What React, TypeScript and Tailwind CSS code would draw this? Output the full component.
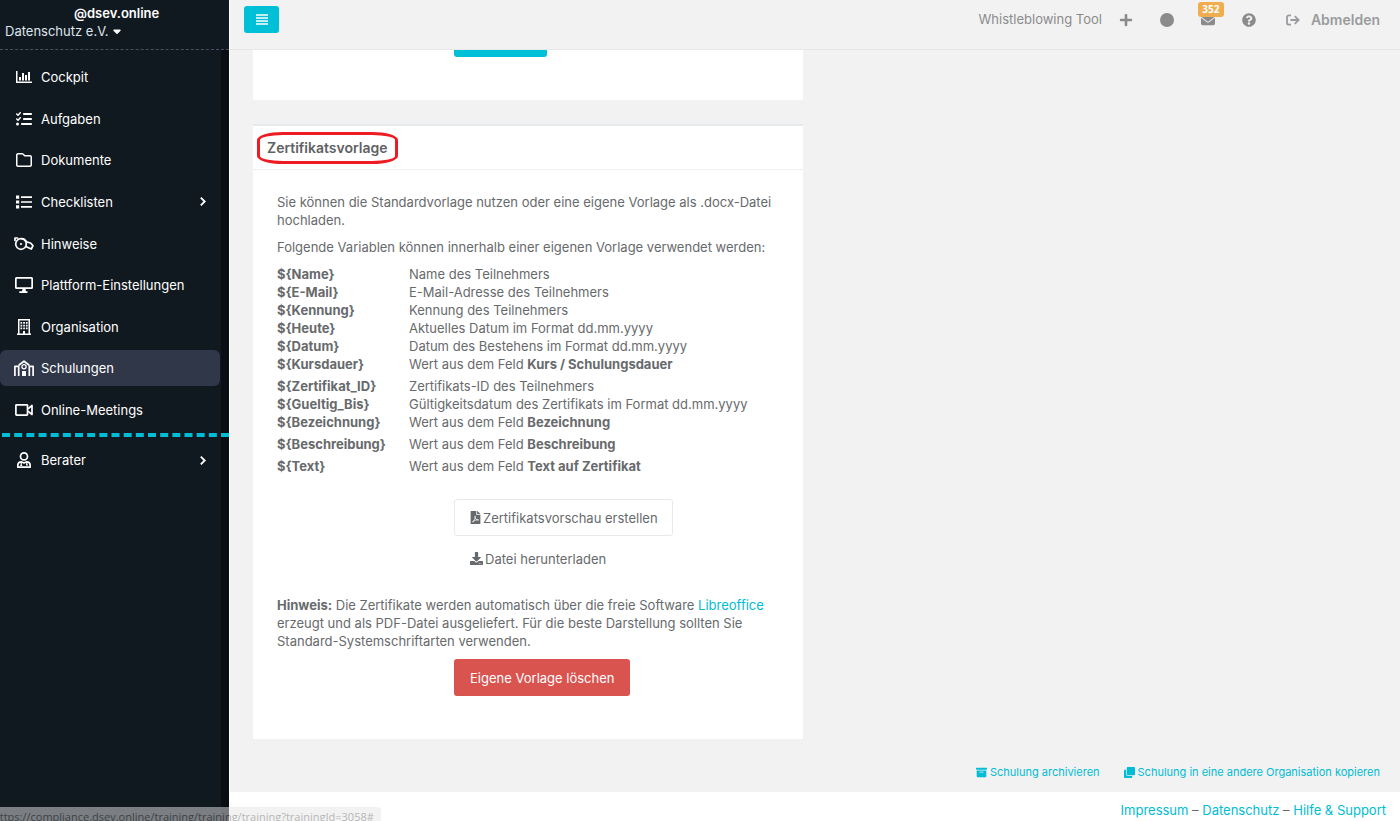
import { ReactNode } from "react";
import { FaClone, FaDownload, FaFilePdf, FaPlus, FaQuestionCircle } from "react-icons/fa";
import {
  FaBoxArchive,
  FaCaretDown,
  FaCircle,
  FaEnvelope,
  FaListCheck,
  FaRegFolder,
} from "react-icons/fa6";

const MenuIcon = () => (
  <svg width="12" height="11" viewBox="0 0 12 11" fill="none" stroke="currentColor" strokeWidth="1.400">
    <path d="M0 1h12M0 4h12M0 7h12M0 10h12" />
  </svg>
);

const ChartIcon = () => (
  <svg width="16" height="14" viewBox="0 0 16 14" fill="currentColor">
    <path d="M0 1h1.500v10.500H16V13H0zM3 7h2v3.500H3zM6 3h2v7.500H6zM9 5h2v5.500H9zM12 2h2v8.500h-2z" />
  </svg>
);

const ListIcon = () => (
  <svg width="16" height="14" viewBox="0 0 16 14" fill="currentColor">
    <path d="M0 .5h3.200v3.200H0zM0 5.400h3.200v3.200H0zM0 10.300h3.200v3.200H0zM5 1.300h11v1.600H5zM5 6.200h11v1.600H5zM5 11.100h11v1.600H5z" />
  </svg>
);

const WhistleIcon = () => (
  <svg width="20" height="14" viewBox="0 0 20 14" fill="none" stroke="currentColor" strokeWidth="1.700" strokeLinejoin="round" strokeLinecap="round">
    <path d="M1 3.500V1h2.500" />
    <circle cx="7" cy="7" r="5.300" />
    <circle cx="7" cy="7" r="1.100" fill="currentColor" stroke="none" />
    <path d="M8 1.700c2 0 3.300 1.200 4.600 3.100l4.300 1.400L19 8.700l-1.700 3.300-5-2.300" />
  </svg>
);

const MonitorIcon = () => (
  <svg width="18" height="16" viewBox="0 0 18 16" fill="currentColor">
    <path fillRule="evenodd" d="M1.500 0h15A1.500 1.500 0 0 1 18 1.500v9a1.500 1.500 0 0 1-1.500 1.500H10.500l.5 2.300H12a.8.8 0 0 1 0 1.600H4.800a.8.8 0 0 1 0-1.600H7l.5-2.300H1.500A1.500 1.500 0 0 1 0 10.500v-9A1.500 1.500 0 0 1 1.500 0zm.2 1.700v8.600h14.600V1.700z" />
  </svg>
);

const BuildingIcon = () => (
  <svg width="14" height="16" viewBox="0 0 14 16" fill="currentColor">
    <path fillRule="evenodd" d="M1 0h12v14.500h1V16H0v-1.500h1zm1.500 1.500v13H6V12h2v2.500h3.500v-13z" />
    <path d="M3.500 3h1.700v1.700H3.500zM6.200 3h1.700v1.700H6.200zM8.900 3h1.700v1.700H8.900zM3.500 5.800h1.700v1.700H3.500zM6.200 5.800h1.700v1.700H6.200zM8.900 5.800h1.700v1.700H8.900zM3.500 8.600h1.700v1.700H3.500zM6.200 8.600h1.700v1.700H6.200zM8.900 8.600h1.700v1.700H8.900z" />
  </svg>
);

const SchoolIcon = () => (
  <svg width="20" height="16" viewBox="0 0 20 16" fill="none" stroke="currentColor" strokeWidth="1.700">
    <path d="M.9 16V6.300h3.800V16M19.100 16V6.300h-3.800V16M4.700 5.200L10 1.200l5.300 4" strokeLinejoin="round" />
    <circle cx="10" cy="6.700" r="2.100" strokeWidth="1.300" />
    <path d="M8 11h4v5H8z" fill="currentColor" stroke="none" />
  </svg>
);

const VideoIcon = () => (
  <svg width="18" height="12" viewBox="0 0 18 12" fill="none" stroke="currentColor" strokeWidth="1.700" strokeLinejoin="round">
    <rect x=".9" y=".9" width="11.600" height="10.200" rx=".6" />
    <path d="M13 4.800l4-3.300v9l-4-3.300" />
  </svg>
);

const AdvisorIcon = () => (
  <svg width="14" height="16" viewBox="0 0 14 16" fill="none" stroke="currentColor" strokeWidth="1.700" strokeLinejoin="round">
    <circle cx="7" cy="4.400" r="3.500" />
    <path d="M4.200 9.800C2.200 10 .8 11.500.8 13.500v1.700h12.400v-1.700c0-2-1.400-3.500-3.400-3.700L7 11z" />
    <path d="M4.200 10v3M9.800 10v2.500M3.200 13.500h2M9 13h2" strokeWidth="1.200" />
  </svg>
);

const ChevronIcon = () => (
  <svg width="6" height="9" viewBox="0 0 6 9" fill="none" stroke="currentColor" strokeWidth="1.800">
    <path d="M.8.700L4.700 4.500.8 8.300" />
  </svg>
);

const SignOutIcon = () => (
  <svg width="14" height="12" viewBox="0 0 14 12" fill="none" stroke="currentColor" strokeWidth="1.800">
    <path d="M5 1.300H3a2 2 0 0 0-2 2v5.400a2 2 0 0 0 2 2h2" />
    <path d="M4.500 6H12M8.800 2.200L12.600 6 8.800 9.800" />
  </svg>
);

interface NavItemProps {
  icon: ReactNode;
  active?: boolean;
  expandable?: boolean;
  children: ReactNode;
}

const NavItem = ({ icon, active, expandable, children }: NavItemProps) => (
  <a
    href="#"
    className={
      active
        ? "mr-px flex h-9 items-center rounded-md bg-[#2f3749] pr-[14px] pl-3"
        : "mr-px flex h-9 items-center pr-[14px] pl-3"
    }
  >
    <span className="flex w-6 shrink-0 justify-center text-base">{icon}</span>
    <span className="ml-[5px] grow">{children}</span>
    {expandable && <ChevronIcon />}
  </a>
);

interface Variable {
  name: string;
  text: string;
  field?: string;
  spaced?: boolean;
}

const variables: Variable[] = [
  { name: "${Name}", text: "Name des Teilnehmers" },
  { name: "${E-Mail}", text: "E-Mail-Adresse des Teilnehmers" },
  { name: "${Kennung}", text: "Kennung des Teilnehmers" },
  { name: "${Heute}", text: "Aktuelles Datum im Format dd.mm.yyyy" },
  { name: "${Datum}", text: "Datum des Bestehens im Format dd.mm.yyyy" },
  { name: "${Kursdauer}", text: "Wert aus dem Feld ", field: "Kurs / Schulungsdauer" },
  { name: "${Zertifikat_ID}", text: "Zertifikats-ID des Teilnehmers", spaced: true },
  { name: "${Gueltig_Bis}", text: "Gültigkeitsdatum des Zertifikats im Format dd.mm.yyyy" },
  { name: "${Bezeichnung}", text: "Wert aus dem Feld ", field: "Bezeichnung" },
  { name: "${Beschreibung}", text: "Wert aus dem Feld ", field: "Beschreibung", spaced: true },
  { name: "${Text}", text: "Wert aus dem Feld ", field: "Text auf Zertifikat", spaced: true },
];

const Sidebar = () => (
  <aside className="flex w-[229px] shrink-0 bg-[#0a0d12] text-[13px] text-white">
    <div className="flex w-full flex-col">
      <div className="h-[50px] border-b border-dashed border-[#465160] bg-[#111920] pt-1 leading-[18px]">
        <p className="pl-[74px] font-semibold">@dsev.online</p>
        <button className="flex items-center gap-[2px] pl-[5px] text-[#dfe4ed]">
          Datenschutz e.V. <FaCaretDown className="text-xs text-white" />
        </button>
      </div>
      <div className="mr-2 grow bg-[#111920]">
        <nav className="pt-[9px]">
          <div className="flex h-[369px] flex-col justify-between">
            <NavItem icon={<ChartIcon />}>Cockpit</NavItem>
            <NavItem icon={<FaListCheck />}>Aufgaben</NavItem>
            <NavItem icon={<FaRegFolder />}>Dokumente</NavItem>
            <NavItem icon={<ListIcon />} expandable>Checklisten</NavItem>
            <NavItem icon={<WhistleIcon />}>Hinweise</NavItem>
            <NavItem icon={<MonitorIcon />}>Plattform-Einstellungen</NavItem>
            <NavItem icon={<BuildingIcon />}>Organisation</NavItem>
            <NavItem icon={<SchoolIcon />} active>Schulungen</NavItem>
            <NavItem icon={<VideoIcon />}>Online-Meetings</NavItem>
          </div>
          <div className="mt-[5px] -mr-2 mb-[5px] ml-[2px] border-t-4 border-dashed border-[#00bcd4]" />
          <NavItem icon={<AdvisorIcon />} expandable>Berater</NavItem>
        </nav>
      </div>
    </div>
  </aside>
);

const TopBar = () => (
  <header className="flex h-[50px] items-start justify-between border-b border-[#e7e7e7] pt-[6px] pr-5 pl-[14px] text-[#8b8b8b]">
    <button aria-label="Menü" className="flex h-[27px] w-[35px] items-center justify-center rounded-[3px] bg-[#00c0d8] text-white">
      <MenuIcon />
    </button>
    <div className="flex h-[27px] items-center text-sm">
      <a href="#" className="text-[13px]">Whistleblowing Tool</a>
      <button aria-label="Neu" className="ml-[17px]"><FaPlus /></button>
      <button aria-label="Status" className="ml-[27px]"><FaCircle /></button>
      <button aria-label="Nachrichten" className="relative ml-[27px]">
        <FaEnvelope />
        <span className="absolute -top-[11px] -left-[3px] h-[15px] w-[26px] rounded-[3px] bg-[#f0ad4e] text-center font-['Open_Sans',sans-serif] text-[10px] leading-[15px] font-bold text-white">
          352
        </span>
      </button>
      <button aria-label="Hilfe" className="ml-[27px]"><FaQuestionCircle /></button>
      <a href="#" className="ml-[30px] flex items-center gap-[11px] font-semibold text-[#999c9e]">
        <SignOutIcon />
        Abmelden
      </a>
    </div>
  </header>
);

const TemplateCard = () => (
  <section className="mt-6 border-t-2 border-[#e7eaec] bg-white">
    <div className="flex h-11 items-center border-b border-[#eeeff0] pl-[14px]">
      <h2 className="relative text-sm font-semibold text-[#5f6264]">
        Zertifikatsvorlage
        <span className="absolute -inset-x-[10px] -inset-y-[6px] rounded-[26px/8px] border-[3px] border-[#ed1c24]" />
      </h2>
    </div>
    <div className="px-6 pt-[23px] pb-[43px]">
      <p>Sie können die Standardvorlage nutzen oder eine eigene Vorlage als .docx-Datei hochladen.</p>
      <p className="mt-[9px]">Folgende Variablen können innerhalb einer eigenen Vorlage verwendet werden:</p>
      <table className="mt-[9px] w-full text-left">
        <tbody>
          {variables.map(({ name, text, field, spaced }) => (
            <tr key={name}>
              <th scope="row" className={spaced ? "w-[132px] p-0 pt-1 font-bold" : "w-[132px] p-0 font-bold"}>
                {name}
              </th>
              <td className={spaced ? "p-0 pt-1" : "p-0"}>
                {text}
                {field && <strong>{field}</strong>}
              </td>
            </tr>
          ))}
        </tbody>
      </table>
      <div className="mt-6 flex flex-col items-start gap-1 pl-[177px]">
        <button className="flex h-[37px] items-center gap-px rounded-[3px] border border-[#e7eaec] px-[14px]">
          <FaFilePdf /> Zertifikatsvorschau erstellen
        </button>
        <button className="flex h-[37px] items-center gap-[2px] px-4">
          <FaDownload /> Datei herunterladen
        </button>
      </div>
      <p className="mt-[19px]">
        <strong>Hinweis:</strong> Die Zertifikate werden automatisch über die freie Software{" "}
        <a href="#" className="text-[#00bcd4]">Libreoffice</a> erzeugt und als PDF-Datei
        ausgeliefert. Für die beste Darstellung sollten Sie Standard-Systemschriftarten verwenden.
      </p>
      <div className="mt-[9px] pl-[177px]">
        <button className="h-[37px] rounded-[3px] bg-[#d9534f] px-4 text-white">
          Eigene Vorlage löschen
        </button>
      </div>
    </div>
  </section>
);

export default function App() {
  return (
    <div className="flex min-h-screen overflow-hidden bg-[#f2f2f2] font-['Inter','Open_Sans',sans-serif] text-[13px] leading-[18px] text-[#676a6c]">
      <Sidebar />
      <div className="flex min-w-0 grow flex-col border-l border-white">
        <TopBar />
        <main className="grid grid-cols-2 gap-6 pr-6 pl-[23px]">
          <div>
            <section className="h-[50px] bg-white pl-[201px]">
              <div className="h-[7px] w-[93px] rounded-b-[3px] bg-[#00c0d8]" />
            </section>
            <TemplateCard />
          </div>
        </main>
        <div className="mt-6 mr-5 flex justify-end gap-6 text-[11px] leading-[18px] text-[#00bcd4]">
          <a href="#" className="flex items-center gap-[3px]">
            <FaBoxArchive /> Schulung archivieren
          </a>
          <a href="#" className="flex items-center gap-[3px]">
            <FaClone /> Schulung in eine andere Organisation kopieren
          </a>
        </div>
        <footer className="mt-[11px] grow bg-white pt-[9px] pr-[14px] text-right">
          <a href="#" className="text-[#00bcd4]">Impressum</a> –{" "}
          <a href="#" className="text-[#00bcd4]">Datenschutz</a> –{" "}
          <a href="#" className="text-[#00bcd4]">Hilfe &amp; Support</a>
        </footer>
      </div>
      <div className="fixed bottom-0 left-0 h-[14px] overflow-hidden rounded-tr-[4px] bg-[#e6e6e6] pr-[7px] font-['Open_Sans',sans-serif] text-[11px] leading-[20px] whitespace-nowrap text-[#6b6b6b] opacity-50">
        <span className="-ml-[7px]">https://compliance.dsev.online/training/training/training?trainingId=3058#</span>
      </div>
    </div>
  );
}
